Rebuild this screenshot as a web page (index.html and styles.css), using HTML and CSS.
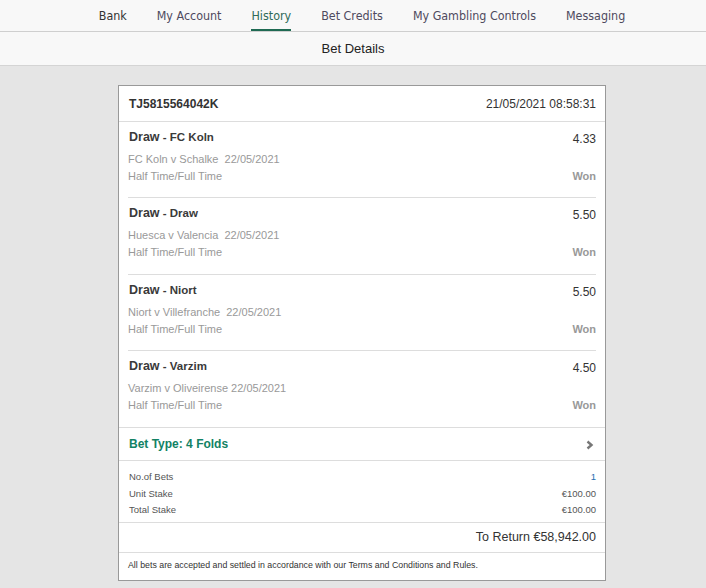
FILE: index.html
```html
<!DOCTYPE html>
<html lang="en">
<head>
    <meta charset="UTF-8">
    <meta name="viewport" content="width=device-width, initial-scale=1.0">
    <title>Bet Details</title>
    <link rel="stylesheet" href="styles.css">
</head>
<body>
    <nav class="topnav">
        <a href="#" class="nav-item nav-dark">Bank</a>
        <a href="#" class="nav-item">My Account</a>
        <a href="#" class="nav-item active">History</a>
        <a href="#" class="nav-item">Bet Credits</a>
        <a href="#" class="nav-item">My Gambling Controls</a>
        <a href="#" class="nav-item">Messaging</a>
    </nav>

    <div class="subheader">Bet Details</div>

    <main class="page">
        <div class="card">
            <div class="card-head">
                <span class="bet-ref">TJ5815564042K</span>
                <span class="bet-date">21/05/2021 08:58:31</span>
            </div>

            <div class="selection">
                <div class="sel-top">
                    <span class="sel-name"><span class="sel-pick">Draw</span> - FC Koln</span>
                    <span class="sel-odds">4.33</span>
                </div>
                <div class="sel-event">FC Koln v Schalke&nbsp; 22/05/2021</div>
                <div class="sel-bottom">
                    <span>Half Time/Full Time</span>
                    <span class="sel-result">Won</span>
                </div>
            </div>

            <div class="selection">
                <div class="sel-top">
                    <span class="sel-name"><span class="sel-pick">Draw</span> - Draw</span>
                    <span class="sel-odds">5.50</span>
                </div>
                <div class="sel-event">Huesca v Valencia&nbsp; 22/05/2021</div>
                <div class="sel-bottom">
                    <span>Half Time/Full Time</span>
                    <span class="sel-result">Won</span>
                </div>
            </div>

            <div class="selection">
                <div class="sel-top">
                    <span class="sel-name"><span class="sel-pick">Draw</span> - Niort</span>
                    <span class="sel-odds">5.50</span>
                </div>
                <div class="sel-event">Niort v Villefranche&nbsp; 22/05/2021</div>
                <div class="sel-bottom">
                    <span>Half Time/Full Time</span>
                    <span class="sel-result">Won</span>
                </div>
            </div>

            <div class="selection last">
                <div class="sel-top">
                    <span class="sel-name"><span class="sel-pick">Draw</span> - Varzim</span>
                    <span class="sel-odds">4.50</span>
                </div>
                <div class="sel-event">Varzim v Oliveirense 22/05/2021</div>
                <div class="sel-bottom">
                    <span>Half Time/Full Time</span>
                    <span class="sel-result">Won</span>
                </div>
            </div>

            <div class="bet-type">
                <span>Bet Type: 4 Folds</span>
                <svg class="chevron" width="8" height="10" viewBox="0 0 8 10">
                    <path d="M1.5 1.5 L5.5 5 L1.5 8.5" fill="none" stroke="#777" stroke-width="2.4"/>
                </svg>
            </div>

            <div class="summary">
                <div class="sum-row"><span>No.of Bets</span><span class="sum-count">1</span></div>
                <div class="sum-row"><span>Unit Stake</span><span>€100.00</span></div>
                <div class="sum-row"><span>Total Stake</span><span>€100.00</span></div>
            </div>

            <div class="to-return">To Return €58,942.00</div>

            <div class="terms">All bets are accepted and settled in accordance with our Terms and Conditions and Rules.</div>
        </div>
    </main>
</body>
</html>
```

FILE: styles.css
```css
body {
    margin: 0;
    padding: 0;
    font-family: 'Liberation Sans', Arial, sans-serif;
    background-color: #e5e5e5;
    color: #333;
}
.topnav {
    display: flex;
    justify-content: center;
    gap: 30px;
    height: 31px;
    padding-left: 18px;
    background-color: #f8f8f8;
    border-bottom: 1px solid #cfcfcf;
}
.nav-item {
    display: flex;
    align-items: center;
    height: 31px;
    padding-top: 1px;
    border-bottom: 2px solid transparent;
    box-sizing: border-box;
    font-family: 'DejaVu Sans Condensed', 'DejaVu Sans', sans-serif;
    font-size: 12.4px;
    color: #4e4a5e;
    text-decoration: none;
}
.nav-dark {
    color: #333;
}
.nav-item.active {
    color: #2e6b58;
    border-bottom-color: #1f6a53;
}
.subheader {
    height: 33px;
    line-height: 33px;
    text-align: center;
    font-size: 13px;
    color: #222;
    background-color: #f8f8f8;
    border-bottom: 1px solid #d4d4d4;
}
.page {
    padding: 19px 0 8px;
}
.card {
    width: 486px;
    margin: 0 0 0 118px;
    background-color: #fff;
    border: 1px solid #999;
}
.card-head {
    display: flex;
    justify-content: space-between;
    align-items: center;
    height: 35px;
    padding: 0 9px 0 10px;
    border-bottom: 1px solid #ddd;
    font-size: 12px;
}
.bet-ref {
    font-weight: bold;
}
.selection {
    margin: 0 9px;
    padding: 6px 0 12px;
    border-bottom: 1px solid #ddd;
    font-size: 11px;
    color: #999;
}
.selection + .selection {
    padding-bottom: 12.5px;
}
.selection.last {
    margin: 0;
    padding: 6px 9px 13px;
}
.sel-top {
    display: flex;
    justify-content: space-between;
    height: 18px;
    line-height: 18px;
    margin-bottom: 3px;
}
.sel-name {
    font-weight: bold;
    font-size: 11.5px;
    color: #3a3a3a;
    padding-left: 1px;
}
.sel-pick {
    font-size: 12.5px;
}
.sel-odds {
    font-size: 12px;
    color: #333;
    margin-top: 2px;
}
.sel-event {
    line-height: 18px;
    padding-top: 1px;
}
.sel-bottom {
    display: flex;
    justify-content: space-between;
    line-height: 18px;
    margin-top: -1px;
}
.sel-result {
    font-weight: bold;
}
.bet-type {
    display: flex;
    justify-content: space-between;
    align-items: center;
    height: 32px;
    padding: 0 11px 0 10px;
    border-bottom: 1px solid #ddd;
    font-size: 12px;
    font-weight: bold;
    color: #128264;
}
.chevron {
    margin-top: 2px;
}
.summary {
    padding: 8px 9px 3px 10px;
    border-bottom: 1px solid #ddd;
    font-size: 9.5px;
    color: #555;
}
.sum-row {
    display: flex;
    justify-content: space-between;
    line-height: 16.5px;
}
.sum-count {
    color: #2a6fb0;
}
.to-return {
    height: 29px;
    line-height: 29px;
    padding: 0 9px;
    text-align: right;
    font-size: 12.5px;
    border-bottom: 1px solid #ddd;
}
.terms {
    height: 27px;
    line-height: 25px;
    padding: 0 9px;
    font-size: 8.8px;
    color: #333;
}
```
